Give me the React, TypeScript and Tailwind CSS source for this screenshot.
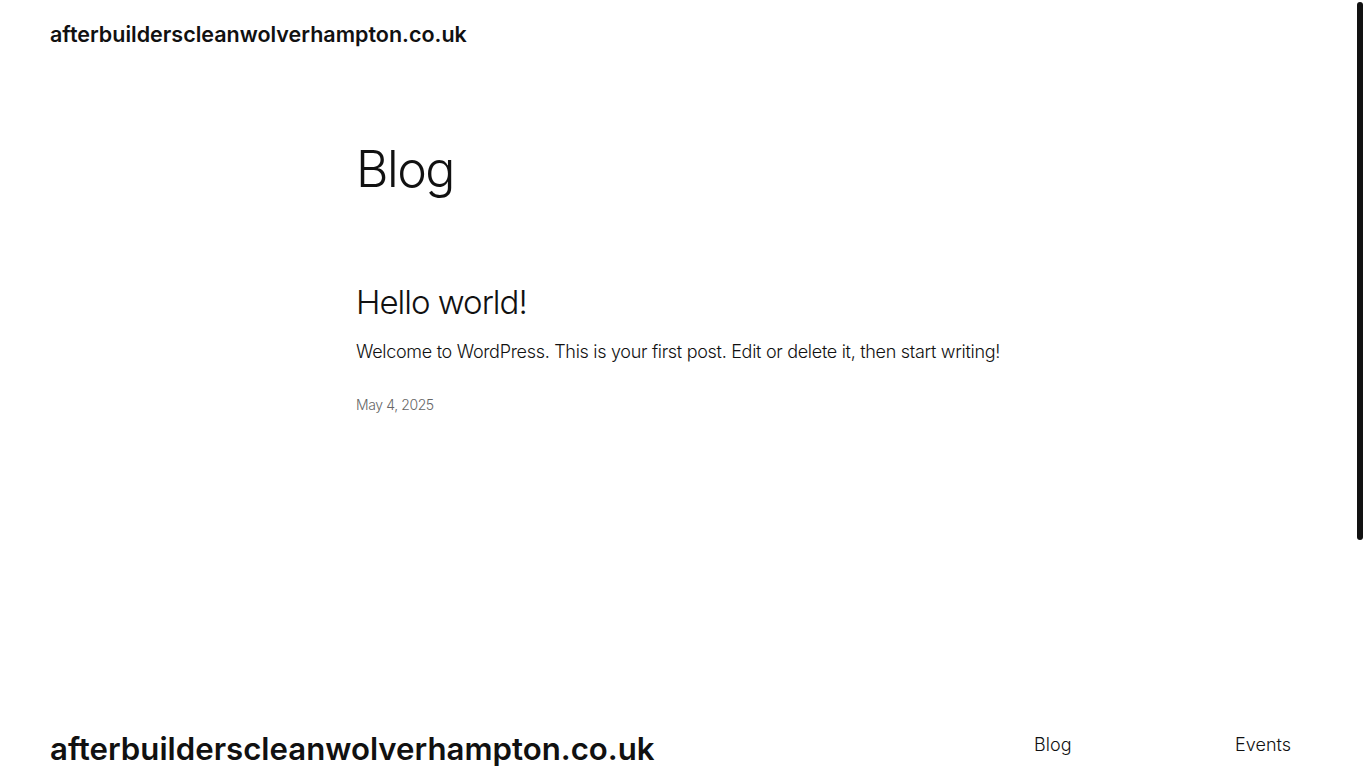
export default function App() {
  return (
    <div
      className="min-h-[1096px] bg-white text-[#111111] flex flex-col"
      style={{ fontFamily: 'Inter, "Noto Sans", sans-serif' }}
    >
      <header className="px-[50px] pt-[20px] pb-[21px]">
        <a href="#" className="text-[21.5px] font-semibold leading-[28px]">
          afterbuilderscleanwolverhampton.co.uk
        </a>
      </header>

      <main className="w-[654px] mx-auto pt-[70px] pb-[316px]">
        <h1 className="text-[50px] font-light tracking-[-1.5px] leading-[1.2]">Blog</h1>

        <article className="mt-[84px]">
          <h2 className="text-[33px] font-light tracking-[-1px] leading-[1.2]">
            <a href="#">Hello world!</a>
          </h2>
          <p className="mt-[15px] text-[18px] font-light tracking-[-0.3px] leading-[1.6]">
            Welcome to WordPress. This is your first post. Edit or delete it, then start writing!
          </p>
          <div className="mt-[28px] text-[14px] font-light text-[#666] tracking-[-0.4px]">May 4, 2025</div>
        </article>
      </main>

      <footer className="pl-[50px] pr-[75px] pb-[300px] flex justify-between items-start">
        <a href="#" className="text-[31.2px] font-semibold leading-[1.2]">
          afterbuilderscleanwolverhampton.co.uk
        </a>
        <nav className="flex text-[18px] font-light">
          <a href="#" className="w-[201px]">Blog</a>
          <a href="#">Events</a>
        </nav>
      </footer>

      <div className="fixed right-[3px] top-[2px] w-[6px] h-[538px] rounded-full bg-[#111111]" aria-hidden="true" />
    </div>
  );
}
